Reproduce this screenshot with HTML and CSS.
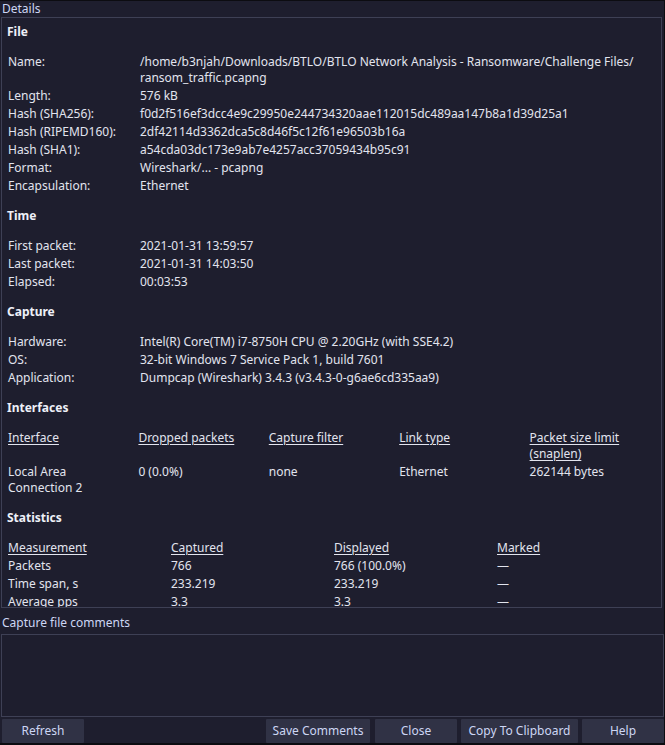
FILE: index.html
```html
<!DOCTYPE html>
<html>
<head>
<meta charset="utf-8">
<link rel="stylesheet" href="styles.css">
</head>
<body>
<div class="window">
  <div class="caption">Details</div>
  <div class="details">
    <div class="section first">
      <div class="heading">File</div>
      <div class="row"><div class="lbl">Name:</div><div class="val">/home/b3njah/Downloads/BTLO/BTLO Network Analysis - Ransomware/Challenge Files/<br>ransom_traffic.pcapng</div></div>
      <div class="row"><div class="lbl">Length:</div><div class="val">576 kB</div></div>
      <div class="row"><div class="lbl">Hash (SHA256):</div><div class="val">f0d2f516ef3dcc4e9c29950e244734320aae112015dc489aa147b8a1d39d25a1</div></div>
      <div class="row"><div class="lbl">Hash (RIPEMD160):</div><div class="val">2df42114d3362dca5c8d46f5c12f61e96503b16a</div></div>
      <div class="row"><div class="lbl">Hash (SHA1):</div><div class="val">a54cda03dc173e9ab7e4257acc37059434b95c91</div></div>
      <div class="row"><div class="lbl">Format:</div><div class="val">Wireshark/... - pcapng</div></div>
      <div class="row"><div class="lbl">Encapsulation:</div><div class="val">Ethernet</div></div>
    </div>
    <div class="section">
      <div class="heading">Time</div>
      <div class="row"><div class="lbl">First packet:</div><div class="val">2021-01-31 13:59:57</div></div>
      <div class="row"><div class="lbl">Last packet:</div><div class="val">2021-01-31 14:03:50</div></div>
      <div class="row"><div class="lbl">Elapsed:</div><div class="val">00:03:53</div></div>
    </div>
    <div class="section">
      <div class="heading">Capture</div>
      <div class="row"><div class="lbl">Hardware:</div><div class="val">Intel(R) Core(TM) i7-8750H CPU @ 2.20GHz (with SSE4.2)</div></div>
      <div class="row"><div class="lbl">OS:</div><div class="val">32-bit Windows 7 Service Pack 1, build 7601</div></div>
      <div class="row"><div class="lbl">Application:</div><div class="val">Dumpcap (Wireshark) 3.4.3 (v3.4.3-0-g6ae6cd335aa9)</div></div>
    </div>
    <div class="section">
      <div class="heading">Interfaces</div>
      <table class="tbl">
        <tr><th><u>Interface</u></th><th><u>Dropped packets</u></th><th><u>Capture filter</u></th><th><u>Link type</u></th><th><u>Packet size limit (snaplen)</u></th></tr>
        <tr><td>Local Area Connection 2</td><td>0 (0.0%)</td><td>none</td><td>Ethernet</td><td>262144 bytes</td></tr>
      </table>
    </div>
    <div class="section">
      <div class="heading">Statistics</div>
      <table class="tbl">
        <tr><th><u>Measurement</u></th><th><u>Captured</u></th><th><u>Displayed</u></th><th><u>Marked</u></th></tr>
        <tr><td>Packets</td><td>766</td><td>766 (100.0%)</td><td>—</td></tr>
        <tr><td>Time span, s</td><td>233.219</td><td>233.219</td><td>—</td></tr>
        <tr><td>Average pps</td><td>3.3</td><td>3.3</td><td>—</td></tr>
      </table>
    </div>
  </div>
  <div class="caption comments-cap">Capture file comments</div>
  <div class="comments"></div>
  <div class="buttons">
    <div class="btn">Refresh</div>
    <div class="spacer"></div>
    <div class="btn">Save Comments</div>
    <div class="btn">Close</div>
    <div class="btn">Copy To Clipboard</div>
    <div class="btn">Help</div>
  </div>
</div>
</body>
</html>
```
FILE: styles.css
```css
html, body {
  margin: 0;
  padding: 0;
  background: #0c0c11;
}
body {
  font-family: "Noto Sans", "Open Sans", sans-serif;
  font-size: 12px;
  color: #e2e4ee;
}
.window {
  margin-top: 1px;
  width: 664px;
  height: 742px;
  background: #1e1e2e;
  display: flex;
  flex-direction: column;
  overflow: hidden;
}
.caption {
  height: 16px;
  line-height: 16px;
  padding-left: 2px;
  color: #cdd6f4;
  flex: none;
}
.comments-cap {
  height: 16px;
  padding-top: 7px;
  padding-bottom: 3px;
}
.details {
  margin-left: 1px;
  width: 661px;
  border: 1px solid #3e4055;
  padding: 5px 2px 0 6px;
  box-sizing: border-box;
  height: 591px;
  flex: none;
  overflow: hidden;
}
.section {
  margin-top: 12px;
}
.section.first {
  margin-top: 0;
}
.heading {
  font-weight: bold;
  line-height: 18px;
  margin-bottom: 12px;
  margin-left: -1px;
  color: #eef0f8;
}
.row {
  display: grid;
  grid-template-columns: 132px 1fr;
  padding: 1px 0;
  line-height: 16px;
}
.val {
  white-space: nowrap;
}
.tbl {
  width: 652px;
  table-layout: fixed;
  border-collapse: collapse;
}
.tbl th, .tbl td {
  text-align: left;
  font-weight: normal;
  padding: 1px 8px 1px 0;
  line-height: 16px;
  vertical-align: top;
}
.tbl th u {
  text-decoration-thickness: 1px;
  text-underline-offset: 2px;
}
.comments {
  margin-left: 1px;
  width: 663px;
  height: 83px;
  flex: none;
  box-sizing: border-box;
  border: 1px solid #3e4055;
  background: #1e1e2e;
}
.buttons {
  margin-top: 2px;
  height: 24px;
  flex: none;
  display: flex;
  gap: 4.5px;
  padding-left: 2px;
  padding-right: 0;
}
.spacer {
  flex: 1;
}
.btn {
  min-width: 82px;
  box-sizing: border-box;
  padding: 0 7px;
  height: 24px;
  line-height: 24px;
  text-align: center;
  background: #303245;
  color: #cdd6f4;
  border-radius: 1px;
}
```
